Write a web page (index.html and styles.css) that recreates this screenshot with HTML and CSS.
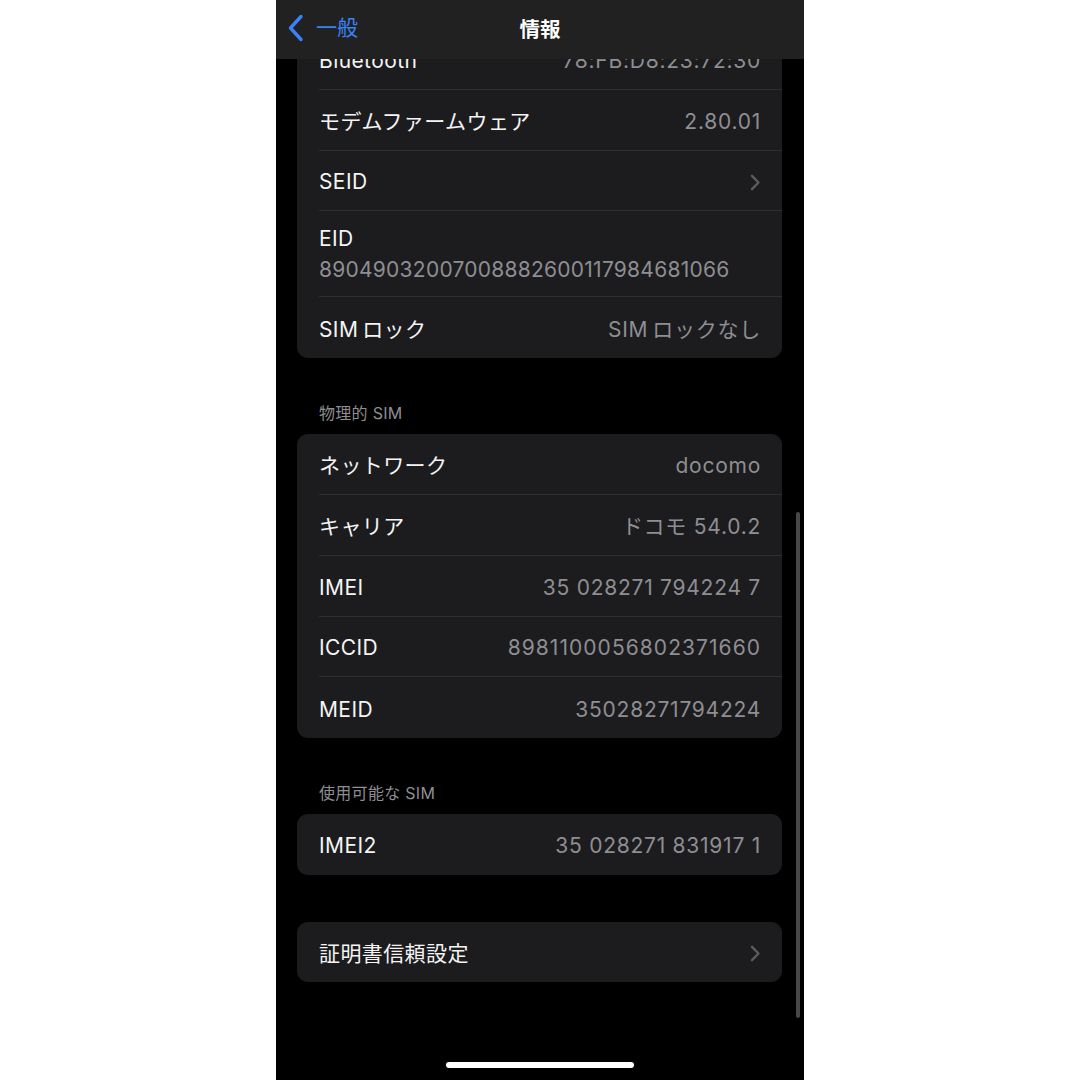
FILE: index.html
```html
<!DOCTYPE html>
<html lang="ja">
<head>
<meta charset="utf-8">
<title>情報</title>
<link rel="stylesheet" href="styles.css">
</head>
<body>
<div class="phone">
  <div class="navbar">
    <div class="back">
      <svg class="back-chev" width="18" height="28" viewBox="0 0 18 28"><path d="M14 2.5 L3.5 14 L14 25.5" fill="none" stroke="#3a82f6" stroke-width="3.4" stroke-linecap="round" stroke-linejoin="round"/></svg>
      <span class="back-text">一般</span>
    </div>
    <div class="title">情報</div>
  </div>

  <div class="content">
    <div class="card">
      <div class="row"><span class="label">Bluetooth</span><span class="value">78:FB:D8:23:72:30</span></div>
      <div class="row"><span class="label">モデムファームウェア</span><span class="value">2.80.01</span></div>
      <div class="row"><span class="label">SEID</span><span class="chev"><svg width="11" height="17" viewBox="0 0 11 17"><path d="M2 1.8 L8.5 8.5 L2 15.2" fill="none" stroke="#5b5b60" stroke-width="2.4" stroke-linecap="round" stroke-linejoin="round"/></svg></span></div>
      <div class="row row-tall"><span class="label">EID</span><span class="value sub">89049032007008882600117984681066</span></div>
      <div class="row"><span class="label">SIM<span class="thin"> </span>ロック</span><span class="value">SIM<span class="thin"> </span>ロックなし</span></div>
    </div>

    <div class="section-head">物理的 SIM</div>
    <div class="card">
      <div class="row"><span class="label">ネットワーク</span><span class="value">docomo</span></div>
      <div class="row"><span class="label">キャリア</span><span class="value">ドコモ 54.0.2</span></div>
      <div class="row"><span class="label">IMEI</span><span class="value">35 028271 794224 7</span></div>
      <div class="row"><span class="label">ICCID</span><span class="value wide">8981100056802371660</span></div>
      <div class="row"><span class="label">MEID</span><span class="value">35028271794224</span></div>
    </div>

    <div class="section-head">使用可能な SIM</div>
    <div class="card">
      <div class="row"><span class="label">IMEI2</span><span class="value">35 028271 831917 1</span></div>
    </div>

    <div class="card card-gap">
      <div class="row"><span class="label">証明書信頼設定</span><span class="chev"><svg width="11" height="17" viewBox="0 0 11 17"><path d="M2 1.8 L8.5 8.5 L2 15.2" fill="none" stroke="#5b5b60" stroke-width="2.4" stroke-linecap="round" stroke-linejoin="round"/></svg></span></div>
    </div>
  </div>

  <div class="scrollbar"></div>
  <div class="home-indicator"></div>
</div>
</body>
</html>
```

FILE: styles.css
```css
html, body {
  margin: 0;
  padding: 0;
  background: #ffffff;
}

body {
  font-family: Inter, "Noto Sans CJK JP", sans-serif;
}

.phone {
  position: relative;
  width: 528px;
  height: 1080px;
  margin: 0 0 0 276px;
  background: #000000;
  overflow: hidden;
}

.navbar {
  position: absolute;
  top: 0;
  left: 0;
  right: 0;
  height: 59px;
  background: #212122;
  z-index: 5;
  display: flex;
  align-items: center;
  justify-content: center;
}

.back {
  position: absolute;
  left: 11px;
  top: 14px;
  display: flex;
  align-items: center;
  gap: 11px;
}

.back-text {
  color: #3a82f6;
  font-size: 21px;
  line-height: 28px;
}

.title {
  color: #ffffff;
  font-size: 20.5px;
  font-weight: 600;
  line-height: 28px;
}

.content {
  padding: 29px 22px 0 21px;
  display: flex;
  flex-direction: column;
}

.card {
  background: #1c1c1e;
  border-radius: 11px;
  padding-left: 22px;
  overflow: hidden;
}

.row {
  height: 60.8px;
  display: flex;
  align-items: center;
  justify-content: space-between;
  padding-right: 21px;
  padding-top: 4px;
  border-bottom: 1px solid #2f2f31;
  box-sizing: border-box;
}

.row:last-child {
  border-bottom: none;
}

.card:not(:first-child) .row:only-child {
  height: 60.4px;
}

.row-tall {
  height: 86px;
  flex-direction: column;
  align-items: flex-start;
  justify-content: center;
  gap: 5px;
  padding-top: 2px;
}

.label {
  color: #f4f4f5;
  font-size: 21px;
  line-height: 26px;
  letter-spacing: 0.4px;
}

.value {
  color: #8e8e93;
  font-size: 21px;
  line-height: 26px;
  letter-spacing: 0.75px;
}

.value.wide {
  letter-spacing: 1.05px;
}

.value.sub {
  letter-spacing: 0.25px;
}

.thin {
  letter-spacing: -2px;
}

.chev {
  display: flex;
  align-items: center;
  margin-right: 0;
}

.section-head {
  color: #8e8e93;
  font-size: 16px;
  line-height: 20px;
  letter-spacing: 0.3px;
  padding: 45px 0 11px 22px;
}

.card-gap {
  margin-top: 47px;
}

.scrollbar {
  position: absolute;
  left: 520px;
  top: 512px;
  width: 4px;
  height: 506px;
  border-radius: 2px;
  background: #48484b;
}

.home-indicator {
  position: absolute;
  left: 170px;
  top: 1062px;
  width: 188px;
  height: 6px;
  border-radius: 3px;
  background: #ffffff;
}
```
